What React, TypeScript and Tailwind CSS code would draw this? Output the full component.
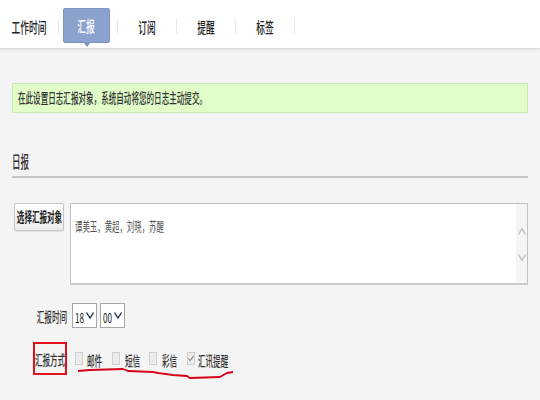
import React from "react";

const F = "font-['Noto_Sans_CJK_SC','Noto_Sans',sans-serif]";

function Tab({ label }: { label: string }) {
  return (
    <div className="w-[58px] h-full flex items-center justify-center pt-[5px]">
      <span className="inline-block whitespace-nowrap text-[15px] font-medium leading-none text-[#222] scale-x-[0.58] origin-center">{label}</span>
    </div>
  );
}

function Sep() {
  return <div className="w-px h-[15px] bg-[#e8e8e8] self-center mt-[5px]" />;
}

function Cb({ checked = false }: { checked?: boolean }) {
  return (
    <div className="w-[8px] h-[13px] bg-[#ececec] border border-[#cfcfcf] flex items-center justify-center">
      {checked && (
        <svg width="7" height="7" viewBox="0 0 7 7">
          <polyline points="0.5,3.5 2.5,6 6.5,0.5" fill="none" stroke="#555" strokeWidth="1" />
        </svg>
      )}
    </div>
  );
}

function Sel({ value }: { value: string }) {
  return (
    <div className="w-[25px] h-[25px] bg-white border border-[#a6a6a6] flex items-center pl-[2px]">
      <div className="w-[11px]">
        <span className="inline-block whitespace-nowrap text-[14px] leading-none text-[#222] scale-x-[0.58] origin-left">{value}</span>
      </div>
      <svg width="8" height="7" viewBox="0 0 8 7">
        <polyline points="0.5,0.5 4,6 7.5,0.5" fill="none" stroke="#1f2b4a" strokeWidth="1.3" />
      </svg>
    </div>
  );
}

const lab = "inline-block whitespace-nowrap text-[13.5px] font-medium leading-none text-[#333] scale-x-[0.56]";

export default function App() {
  return (
    <div className={"relative w-[540px] h-[400px] overflow-hidden bg-[#f4f4f4] " + F}>
      {/* nav */}
      <div className="h-[49px] bg-white border-b border-[#dcdcdc] shadow-[0_1px_2px_rgba(0,0,0,0.08)] flex">
        <Tab label="工作时间" />
        <Sep />
        <div className="w-[58px] h-full flex items-start pt-[8px] pl-[4px]">
          <div className="relative w-[47px] h-[35px] bg-[#8ba2cc] border border-[#7f96c2] rounded-[2px] flex items-center justify-center">
            <span className="inline-block whitespace-nowrap text-[15px] font-medium leading-none text-white scale-x-[0.58] origin-center">汇报</span>
            <div className="absolute left-1/2 -translate-x-1/2 top-full w-0 h-0 border-x-[4px] border-x-transparent border-t-[5px] border-t-[#7f96c2]" />
          </div>
        </div>
        <Sep />
        <Tab label="订阅" />
        <Sep />
        <Tab label="提醒" />
        <Sep />
        <Tab label="标签" />
        <Sep />
      </div>

      <div className="px-3">
        {/* notice */}
        <div className="mt-[34px] h-[30px] bg-[#e1fec9] border border-[#c8e8ac] flex items-center pl-[5px]">
          <span className={lab + " origin-left"}>在此设置日志汇报对象，系统自动将您的日志主动提交。</span>
        </div>

        {/* heading */}
        <div className="mt-[32px] h-[33px] border-b-2 border-[#c6c6c6] flex items-center">
          <span className="inline-block whitespace-nowrap text-[17px] font-medium leading-none text-[#333] scale-x-[0.5] origin-left">日报</span>
        </div>

        {/* reporters */}
        <div className="mt-[25px] flex items-start">
          <div className="ml-[2px] w-[50px] h-[28px] bg-gradient-to-b from-white to-[#ececec] border border-[#c6c6c6] rounded-[2px] shadow-[0_1px_1px_rgba(0,0,0,0.08)] flex items-center justify-center">
            <span className="inline-block whitespace-nowrap text-[13.5px] font-bold leading-none text-[#222] scale-x-[0.56] origin-center">选择汇报对象</span>
          </div>
          <div className="ml-[6px] flex-1 h-[82px] bg-white border border-[#c2c2c2] border-b-2 border-b-[#cacaca] flex">
            <div className="flex-1 pl-[4px] pt-[8px]">
              <span className="inline-block whitespace-nowrap text-[13px] leading-none text-[#555] scale-x-[0.57] origin-left">谭美玉，黄超，刘晓，苏醒</span>
            </div>
            <div className="w-[11px] bg-[#f5f5f5] flex flex-col items-center pt-[24px] gap-[19px]">
              <svg width="8" height="7" viewBox="0 0 8 7">
                <polyline points="0.5,6.5 4,0.5 7.5,6.5" fill="none" stroke="#b8b8b8" strokeWidth="1.2" />
              </svg>
              <svg width="8" height="7" viewBox="0 0 8 7">
                <polyline points="0.5,0.5 4,6.5 7.5,0.5" fill="none" stroke="#b8b8b8" strokeWidth="1.2" />
              </svg>
            </div>
          </div>
        </div>

        {/* time */}
        <div className="mt-[18px] flex items-center">
          <div className="w-[56px] flex justify-end pr-[1px] pt-[3px]">
            <span className={lab + " origin-right"}>汇报时间</span>
          </div>
          <div className="ml-[4px]"><Sel value="18" /></div>
          <div className="ml-[3px]"><Sel value="00" /></div>
        </div>

        {/* method */}
        <div className="mt-[14px] flex items-center">
          <div className="w-[55px] flex justify-end">
            <div className="w-[34px] h-[33px] border-2 border-[#e3101c] flex items-center justify-center pt-[2px]">
              <span className={lab + " origin-center"}>汇报方式</span>
            </div>
          </div>
          <div className="ml-[8px]"><Cb /></div>
          <div className="ml-[4px] w-[15px]">
            <span className={lab + " origin-left"}>邮件</span>
          </div>
          <div className="ml-[10px]"><Cb /></div>
          <div className="ml-[5px] w-[15px]">
            <span className={lab + " origin-left"}>短信</span>
          </div>
          <div className="ml-[9px]"><Cb /></div>
          <div className="ml-[5px] w-[15px]">
            <span className={lab + " origin-left"}>彩信</span>
          </div>
          <div className="ml-[10px]"><Cb checked /></div>
          <div className="ml-[3px] w-[30px]">
            <span className={lab + " origin-left"}>汇讯提醒</span>
          </div>
        </div>
      </div>

      {/* red hand-drawn underline annotation */}
      <svg className="absolute left-0 top-0 pointer-events-none" width="540" height="400">
        <polyline
          points="78,371 90,370 123,369 128,371 153,372 158,373 173,375 187,376 190,378 220,377 227,373 233,372"
          fill="none"
          stroke="#d5001a"
          strokeWidth="1.8"
          strokeLinejoin="round"
        />
      </svg>
    </div>
  );
}
